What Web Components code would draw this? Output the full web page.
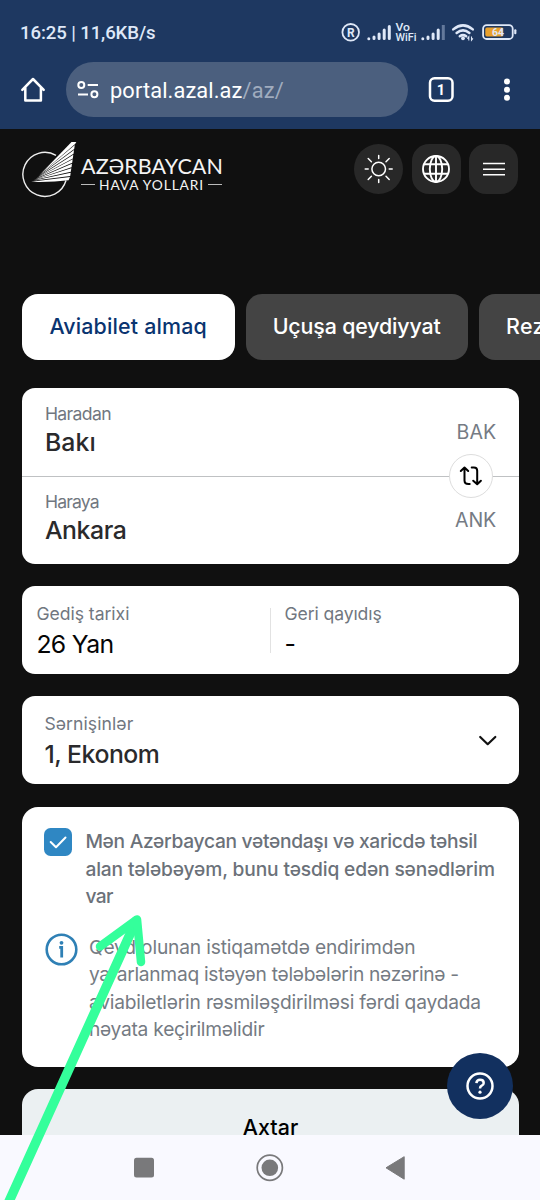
<!DOCTYPE html>
<html lang="az">
<head>
<meta charset="utf-8">
<title>AZAL</title>
<style>
html,body{margin:0;padding:0;background:#101010}
body{width:540px;height:1200px;overflow:hidden;font-family:Inter,"Liberation Sans",sans-serif}
</style>
</head>
<body>
<azal-app></azal-app>
<script>
const define=(name,html,setup)=>{
  const t=document.createElement('template');
  t.innerHTML=html;
  customElements.define(name,class extends HTMLElement{
    constructor(){super();this.attachShadow({mode:'open'}).append(t.content.cloneNode(true));}
    connectedCallback(){if(setup)setup(this,this.shadowRoot);}
  });
};

/* One line of text, tracked so that it spans the width given in "w". */
define('fit-text',`<style>:host{display:block;white-space:pre}span{display:inline-block;line-height:inherit;vertical-align:top}</style><span><slot></slot></span>`,(el,root)=>{
  const w=parseFloat(el.getAttribute('w')),s=root.querySelector('span');
  if(!w)return;
  const n=el.textContent.length;
  const now=s.getBoundingClientRect().width;
  if(now>0)s.style.letterSpacing=((w-now)/n).toFixed(3)+'px';
});

define('status-bar',`<style>
:host{display:flex;height:62px;padding:0 23px 0 20px;box-sizing:border-box;align-items:flex-start;justify-content:space-between;color:#dfe8f8}
fit-text{font:500 18.6px/24px Roboto,sans-serif;margin-top:21px}
svg{display:block;margin-top:18px}
text{font-family:Roboto,Inter,sans-serif;fill:#dfe8f8}
</style>
<fit-text w="135.5">16:25 | 11,6KB/s</fit-text>
<svg width="177" height="28" viewBox="340 18 177 28">
<circle cx="350.7" cy="32.3" r="8.3" fill="none" stroke="#dfe8f8" stroke-width="1.8"/>
<text x="350.8" y="36.7" font-size="12" font-weight="700" text-anchor="middle">R</text>
<g stroke="#dfe8f8" stroke-width="3" stroke-linecap="round"><path d="M368.8 38.7v0M374 38.5v-1.5M379.1 38.5V34M384.2 38.5V30M389.3 38.5V26.5"/><path d="M422.8 38.7v0M428 38.5v-1.5M433.1 38.5V34M438.2 38.5V30"/></g><path d="M443.3 40V25" stroke="#64799b" stroke-width="3"/>
<text x="395.5" y="30.5" font-size="10.5" font-weight="500" textLength="14.5" lengthAdjust="spacingAndGlyphs">Vo</text>
<text x="395.5" y="41.3" font-size="10.5" font-weight="500" textLength="21" lengthAdjust="spacingAndGlyphs">WiFi</text>
<g fill="none" stroke="#dfe8f8" stroke-width="2.5" stroke-linecap="round"><path d="M453.2 29.4Q463 21.3 472.8 29.4M456.6 33Q463 27.8 469.4 33M459.8 36.3q3.2-2.3 6.4 0"/></g>
<circle cx="463" cy="38.3" r="1.9" fill="#dfe8f8"/><path d="M468.8 40.5v-3.7l-1.4 1.8M471.5 36.5v3.7l1.4-1.8" fill="none" stroke="#dfe8f8" stroke-width="1.1"/>
<rect x="483.1" y="25.2" width="29.6" height="13.8" rx="3.6" fill="none" stroke="#dfe8f8" stroke-width="1.8"/>
<path d="M487 27.5h15.5v9H487q-1.7 0-1.7-1.7v-5.6q0-1.7 1.7-1.7z" fill="#e8a02c"/>
<rect x="514.2" y="29.3" width="2.2" height="5" rx="1" fill="#dfe8f8"/>
<text x="498" y="36.2" font-size="10.5" font-weight="700" text-anchor="middle">64</text>
</svg>`);

define('browser-bar',`<style>
:host{display:flex;height:67px;box-sizing:border-box;align-items:flex-start;color:#fff}
svg{display:block}
.home{margin:14px 0 0 20px}
.url{display:flex;align-items:center;width:342px;height:55px;margin-left:20px;border-radius:28px;background:#4b5f7e;box-sizing:border-box;padding-left:11px}
.site{display:flex;font:400 21.8px/30px Roboto,sans-serif;margin-left:11px;margin-top:2px}
.path{color:#a0acbe}
.tabs{margin:14px 0 0 20px}.dots{margin:14px 0 0 46px}
text{font:700 14.5px Roboto,sans-serif;fill:#fff}
</style>
<svg class="home" width="26" height="28" viewBox="20 76 26 28"><path d="M22.3 89.8 33 79l10.7 10.8M25.3 87.5v13.1h15.6V87.5" fill="none" stroke="#fff" stroke-width="2.5" stroke-linecap="round" stroke-linejoin="round"/></svg>
<div class="url">
<svg width="22" height="20" viewBox="77 80 22 20" fill="none" stroke="#fff" stroke-width="2"><circle cx="81.3" cy="85" r="3"/><path d="M87.7 85H98M78 94.5h10"/><circle cx="94.4" cy="94.2" r="3"/></svg>
<div class="site"><fit-text w="132.5">portal.azal.az</fit-text><fit-text class="path" w="41.5">/az/</fit-text></div>
</div>
<svg class="tabs" width="26" height="28" viewBox="428 76 26 28"><rect x="430" y="78.3" width="22.5" height="22.5" rx="4.5" fill="none" stroke="#fff" stroke-width="2.5"/><text x="441" y="94.8" text-anchor="middle">1</text></svg>
<svg class="dots" width="14" height="28" viewBox="500 76 14 28" fill="#fff"><circle cx="507" cy="81.5" r="3"/><circle cx="507" cy="89.7" r="3"/><circle cx="507" cy="97.8" r="3"/></svg>`);

define('azal-logo',`<style>
:host{display:flex;width:204px;height:60px}
svg{flex:none;display:block}
.name{display:flex;flex-direction:column;width:143px;padding-top:13.5px;color:#f4f4f4;font-family:Lato,Inter,sans-serif}
.top{font-size:21.5px;line-height:24px;margin-left:1px}
.sub{display:flex;align-items:center;justify-content:space-between;height:14px;font-size:13.8px;line-height:14px;margin-left:1px;width:141px}
i{width:14px;height:1px;background:#bbb}
</style>
<svg width="58" height="60" viewBox="22 140 58 60">
<path d="M56 155.4A22 22 0 1 0 66 180.5" fill="none" stroke="#eee" stroke-width="1.4"/>
<g fill="#fff"><path d="M41 173.5 71.5 142h4.8l-1.2 2z"/><path d="M39 175.3 74.8 144.9l-.6 4.2z"/><path d="M38 176.5 74 150l-.5 3.8z"/><path d="M37 177.7 73.3 154.7l-.5 3.7z"/><path d="M36 178.6 72.7 159.3l-.5 3.5z"/><path d="M35 179.4 72 163.8l-.5 3.5z"/><path d="M34 180.1 71.3 168.3l-.5 3.4z"/><path d="M33 180.8 70.7 172.8l-.5 3.2z"/><path d="M31 181.8 70 177l-1.4 3.2q-17 2.2-37.6 1.6z"/></g>
</svg>
<div class="name"><fit-text class="top" w="142">AZƏRBAYCAN</fit-text><div class="sub"><i></i><fit-text w="105">HAVA YOLLARI</fit-text><i></i></div></div>`);

define('icon-button',`<style>:host{display:flex;width:49px;height:50px;border-radius:17px;background:#282828;align-items:center;justify-content:center}:host([round]){border-radius:50%}</style><slot></slot>`);

define('site-header',`<style>:host{display:flex;height:165px;padding:0 21.6px 0 22px;box-sizing:border-box;justify-content:space-between;align-items:flex-start}azal-logo{margin-top:11px}nav{display:flex;gap:8.7px;padding-top:15px}svg{display:block;fill:none;stroke:#fff}</style>
<azal-logo></azal-logo>
<nav>
<icon-button round><svg width="30" height="30" viewBox="-14.7 -15 30 30" stroke-width="1.5" stroke-linecap="round"><circle r="6.8"/><path d="M0 10.5v3M-13.5 0h3M10.5 0h3M0-13.5v3M-10.5-10.5l3.2 3.2M10.5-10.5 7.3-7.3M-10.5 10.5l3.2-3.2M10.5 10.5 7.3 7.3"/></svg></icon-button>
<icon-button><svg width="30" height="30" viewBox="-15 -15 30 30" stroke-width="1.9"><circle r="13"/><ellipse rx="6.2" ry="13"/><path d="M0-13v26M-12-4.8h24M-12 4.8h24"/></svg></icon-button>
<icon-button><svg width="24" height="16" viewBox="0 0 24 16" stroke-width="1.5"><path d="M1 2.5h22M1 8.2h22M1 13.8h22"/></svg></icon-button>
</nav>`);

define('tab-pill',`<style>:host{display:block;flex:none;height:66px;border-radius:16px;background:#444;color:#fff;font-size:21.4px;font-weight:500;line-height:65px;padding:0 27px;box-sizing:border-box}:host([active]){background:#fff;color:#0a3470}</style><slot></slot>`);

define('field-item',`<style>
:host{display:block}
.l{font-size:17.6px;line-height:20px;color:#717780}
.v{font-size:24.8px;line-height:30px;margin-top:3.5px;font-weight:500;color:#2a2a2c}
:host([plain]) .v{font-weight:400;color:#050505}
:host([plain]) .v,:host([low]) .v{margin-top:5px}
</style><div class="l"><slot name="label"></slot></div><div class="v"><slot></slot></div>`);

define('form-card',`<style>:host{display:block;box-sizing:border-box;background:#fff;border-radius:13px;width:496.2px}</style><slot></slot>`);

define('route-card',`<style>
:host{display:block;position:relative}
.row{display:flex;justify-content:space-between;height:88px;box-sizing:border-box;padding:15.5px 22.5px 0 22.5px}
.row+.row{border-top:1px solid #bfc1c3;padding-top:14.6px}
.code{font-size:19.6px;line-height:24px;color:#757b84;margin-top:16px}
.swap{position:absolute;right:26px;top:66px;width:44px;height:44px;border:1px solid #ddd;border-radius:50%;background:#fff;box-sizing:border-box;display:grid;place-items:center}
</style>
<div class="row"><field-item><fit-text slot="label" w="66">Haradan</fit-text><fit-text w="51">Bakı</fit-text></field-item><fit-text class="code" w="39.5">BAK</fit-text></div>
<div class="row"><field-item><fit-text slot="label" w="54">Haraya</fit-text><fit-text w="81.5">Ankara</fit-text></field-item><fit-text class="code" w="41">ANK</fit-text></div>
<div class="swap"><svg width="24" height="20" viewBox="0 0 24 20" fill="none" stroke="#000" stroke-width="2" stroke-linecap="round" stroke-linejoin="round"><path d="M1.8 5 5.5 1.5 9.2 5M5.5 1.5v13q0 3.5 4 3.5h1.2M12.7 1.5h2.2q3.3 0 3.3 3.3v13.3M14.2 14.7l4 3.6 3.7-3.6"/></svg></div>`);

define('dates-card',`<style>
:host{display:grid;grid-template-columns:247.2px 1fr;height:88px;padding-top:17.5px;box-sizing:border-box}
field-item{padding-left:14px}
.split{display:block;width:1px;height:45px;background:#e2e2e2;margin-top:4px}
.b{display:flex}
</style>
<field-item plain><fit-text slot="label" w="93">Gediş tarixi</fit-text><fit-text w="77">26 Yan</fit-text></field-item>
<div class="b"><span class="split"></span><field-item plain><fit-text slot="label" w="97">Geri qayıdış</fit-text><fit-text w="10">-</fit-text></field-item></div>`);

define('passengers-card',`<style>:host{display:flex;justify-content:space-between;height:88px;padding:17.5px 20.5px 0 22px;box-sizing:border-box}svg{margin-top:20.5px}</style>
<field-item low><fit-text slot="label" w="89">Sərnişinlər</fit-text><fit-text w="115">1, Ekonom</fit-text></field-item>
<svg width="20" height="14" viewBox="0 0 20 14" fill="none" stroke="#111" stroke-width="2.2" stroke-linecap="round" stroke-linejoin="round"><path d="M2.2 3 9.7 10.2 17.3 3"/></svg>`);

define('student-card',`<style>
:host{display:block;height:260.5px;padding:21.5px 0 0 22px;box-sizing:border-box;color:#6b7179;font-size:19.2px;line-height:27.5px}
.row{display:flex}svg{display:block;flex:none}
.box{margin-right:13px}.agree{font-weight:500}.info{color:#757b83}
.row+.row{margin-top:23px}
.i{margin:-1px 10.5px 0 1px}
</style>
<div class="row"><svg class="box" width="28" height="28" viewBox="0 0 28 28"><rect width="28" height="28" rx="6.5" fill="#2f87c3"/><path d="M6.7 14 12 19.2 21.5 9.5" fill="none" stroke="#fff" stroke-width="2" stroke-linecap="round" stroke-linejoin="round"/></svg>
<div class="agree"><fit-text w="392">Mən Azərbaycan vətəndaşı və xaricdə təhsil</fit-text><fit-text w="409.5">alan tələbəyəm, bunu təsdiq edən sənədlərim</fit-text><fit-text w="27.5">var</fit-text></div></div>
<div class="row"><svg class="i" width="33" height="33" viewBox="0 0 33 33"><circle cx="16.5" cy="16.5" r="14.8" fill="none" stroke="#2f80b5" stroke-width="2.6"/><circle cx="16.5" cy="9.8" r="1.9" fill="#2f80b5"/><path d="M14.2 14.4h2.5v10" fill="none" stroke="#2f80b5" stroke-width="2.8"/></svg>
<div class="info"><fit-text w="326.5">Qeyd olunan istiqamətdə endirimdən</fit-text><fit-text w="370">yararlanmaq istəyən tələbələrin nəzərinə -</fit-text><fit-text w="392">aviabiletlərin rəsmiləşdirilməsi fərdi qaydada</fit-text><fit-text w="175.5">həyata keçirilməlidir</fit-text></div></div>`);

define('help-button',`<style>:host{display:grid;place-items:center;width:66px;height:66px;border-radius:50%;background:#12305f}</style>
<svg width="30" height="30" viewBox="0 0 30 30"><circle cx="15" cy="15" r="12.5" fill="none" stroke="#fff" stroke-width="2.5"/><path d="M11.4 12.2q.3-3.5 3.7-3.5 3.6 0 3.6 3.2 0 1.8-2 2.8-1.7.9-1.7 2.7" fill="none" stroke="#fff" stroke-width="2.5"/><circle cx="15" cy="21.2" r="1.6" fill="#fff"/></svg>`);

define('system-nav',`<style>
:host{display:flex;height:65px;background:#f9f9ff;justify-content:center;align-items:center}svg{display:block}</style>
<svg width="300" height="34" viewBox="120 1150.5 300 34"><g fill="#79797b"><rect x="134" y="1157.3" width="20" height="19.7" rx="2.5"/><circle cx="269.8" cy="1167.3" r="8.3"/><path d="M386 1167.3 404.2 1156.2V1178.7z" stroke="#79797b" stroke-linejoin="round"/></g><circle cx="269.8" cy="1167.3" r="12.6" fill="none" stroke="#79797b" stroke-width="1.7"/></svg>`);

define('azal-app',`<style>
:host{display:flex;flex-direction:column;position:relative;width:540px;height:1200px;overflow:hidden;background:#101010}
.chrome{height:129px;background:#1e3861;flex:none}
main{height:1006px;overflow:hidden;flex:none}
.tabs{display:flex;gap:11px;padding-left:22.4px;padding-top:.4px;height:94.3px;box-sizing:border-box;white-space:nowrap}
.form{display:flex;flex-direction:column;gap:22.1px;padding-left:22.4px}
.route{height:176px}
.search{height:88px;color:#000;font-size:21.4px;font-weight:500;line-height:30px;padding-top:23px;display:flex;justify-content:center}
help-button{position:absolute;left:447px;top:1053.4px}
.arrow{position:absolute;left:0;top:900px;pointer-events:none}
</style>
<div class="chrome"><status-bar></status-bar><browser-bar></browser-bar></div>
<main>
<site-header></site-header>
<div class="tabs"><tab-pill active style="width:212.3px"><fit-text w="157.5">Aviabilet almaq</fit-text></tab-pill><tab-pill style="width:222.4px"><fit-text w="168">Uçuşa qeydiyyat</fit-text></tab-pill><tab-pill style="width:210px"><fit-text w="155">Rezervasiyalar</fit-text></tab-pill></div>
<div class="form">
<form-card class="route"><route-card></route-card></form-card>
<form-card><dates-card></dates-card></form-card>
<form-card><passengers-card></passengers-card></form-card>
<form-card style="border-radius:16px"><student-card></student-card></form-card>
<form-card class="search" style="border-radius:16px;background:#ebf0f2"><fit-text w="55.5">Axtar</fit-text></form-card>
</div>
</main>
<system-nav></system-nav>
<help-button></help-button>
<svg class="arrow" width="160" height="300" viewBox="0 900 160 300" fill="none" stroke="#34ff9b" stroke-linecap="round" stroke-linejoin="round"><path d="M6.5 1207 69 1069 136 921" stroke-width="9.5"/><path d="M100 946.5 137 919.5 141 962" stroke-width="8.5"/></svg>`);
</script>
</body>
</html>
